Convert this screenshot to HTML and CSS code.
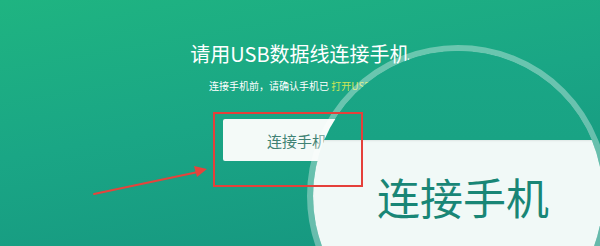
FILE: index.html
```html
<!DOCTYPE html>
<html lang="zh-CN">
<head>
    <meta charset="UTF-8">
    <meta name="viewport" content="width=device-width, initial-scale=1.0">
    <title>连接手机</title>
    <link rel="stylesheet" href="styles.css">
</head>
<body>
    <div class="screen">
        <div class="connect">
            <h1 class="title">请用USB数据线连接手机</h1>
            <p class="hint">连接手机前，请确认手机已 <span class="hint-link">打开USB调试</span></p>
            <button class="connect-btn" type="button">连接手机</button>
        </div>

        <!-- magnified view of the button -->
        <div class="magnifier">
            <div class="magnifier-top"></div>
            <div class="magnifier-bottom">
                <span class="magnifier-text">连接手机</span>
            </div>
        </div>

        <!-- annotations -->
        <div class="mark-box"></div>
        <svg class="mark-arrow" width="130" height="40" viewBox="0 0 130 40">
            <line x1="2" y1="36" x2="106" y2="14" stroke="#e5443c" stroke-width="2" stroke-linecap="round"/>
            <polygon points="115,11 102,8 105,19" fill="#e5443c"/>
        </svg>
    </div>
</body>
</html>
```

FILE: styles.css
```css
body {
    margin: 0;
    font-family: "Noto Sans CJK SC", "Noto Sans", sans-serif;
}
.screen {
    position: relative;
    width: 600px;
    height: 246px;
    overflow: hidden;
    background: linear-gradient(170deg, #1fb481 0%, #1aa685 45%, #15947f 100%);
}
.connect {
    display: flex;
    flex-direction: column;
    align-items: center;
    padding-top: 40px;
}
.title {
    margin: 0;
    font-size: 20px;
    line-height: 28px;
    font-weight: normal;
    color: #fff;
}
.hint {
    margin: 11px 0 0;
    font-size: 10px;
    line-height: 14px;
    color: #fff;
}
.hint-link {
    color: #cfe556;
}
.connect-btn {
    margin-top: 26px;
    width: 154px;
    height: 42px;
    border: none;
    border-radius: 2px;
    background-color: #f4faf8;
    color: #3f8274;
    font-family: inherit;
    font-size: 15px;
    padding: 0 0 0 0;
    text-indent: -6px;
}
.magnifier {
    position: absolute;
    left: 307px;
    top: 45px;
    width: 290px;
    height: 290px;
    border: 6px solid rgba(255, 255, 255, 0.35);
    border-radius: 50%;
    overflow: hidden;
    display: flex;
    flex-direction: column;
    background-clip: padding-box;
}
.magnifier-top {
    height: 89px;
    background: linear-gradient(180deg, #1aa786 0%, #19a384 100%);
}
.magnifier-bottom {
    flex: 1;
    background-color: #f1f9f7;
    box-shadow: inset 0 1px 2px rgba(0, 0, 0, 0.08);
    padding: 31px 0 0 64px;
}
.magnifier-text {
    font-size: 43px;
    line-height: 50px;
    color: #198676;
}
.mark-box {
    position: absolute;
    left: 213px;
    top: 112px;
    width: 146px;
    height: 71px;
    border: 2px solid #e5403a;
}
.mark-arrow {
    position: absolute;
    left: 92px;
    top: 158px;
}
```
